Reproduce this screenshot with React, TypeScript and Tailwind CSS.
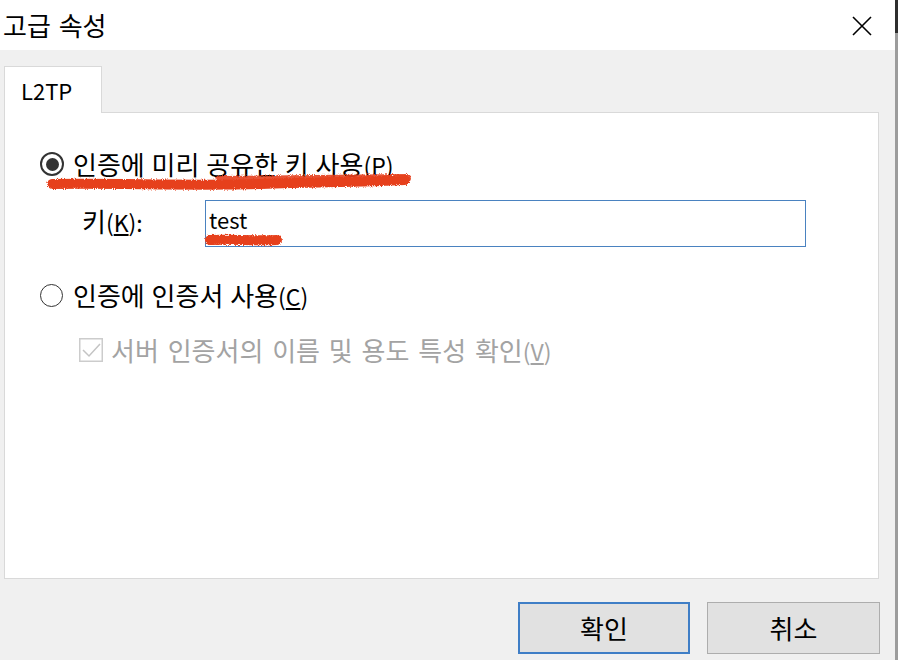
import React from "react";

const FONT = { fontFamily: '"Noto Sans CJK KR", "Noto Sans", sans-serif' };

function Acc({ pre, k, post }: { pre?: string; k: string; post?: string }) {
  return (
    <span className="text-[23px]">
      {pre}(<span className="underline underline-offset-2">{k}</span>){post}
    </span>
  );
}

function Scribbles() {
  return (
    <svg
      className="absolute left-0 top-0 pointer-events-none"
      width={898}
      height={660}
      viewBox="0 0 898 660"
    >
      <defs>
        <filter id="rough" x="-5%" y="-80%" width="110%" height="260%">
          <feTurbulence type="fractalNoise" baseFrequency="0.9" numOctaves="2" seed="5" result="n" />
          <feDisplacementMap in="SourceGraphic" in2="n" scale="4" xChannelSelector="R" yChannelSelector="G" />
        </filter>
      </defs>
      <g filter="url(#rough)" stroke="#e6401c" fill="none" strokeLinecap="round">
        <path d="M52 184 C 120 183, 190 186, 260 184 S 360 182, 405 180" strokeWidth={10} />
        <path d="M220 180 C 280 179, 340 179, 407 178" strokeWidth={8} opacity={0.9} />
        <path d="M210 240 C 230 239, 255 241, 277 240" strokeWidth={10} />
      </g>
    </svg>
  );
}

export default function App() {
  return (
    <div className="relative flex w-[898px] h-[660px] overflow-hidden bg-[#f0f0f0] text-[#000]" style={FONT}>
      <div className="flex flex-col w-[895px] h-full">
        {/* title bar */}
        <div className="flex items-center justify-between h-[50px] bg-white pl-[3px] pr-[23px]">
          <span className="text-[26px] leading-none [word-spacing:2px]">고급 속성</span>
          <svg width="20" height="20" viewBox="0 0 20 20" className="mt-[1px]">
            <path d="M1 1 L19 19 M19 1 L1 19" stroke="#000" strokeWidth="1.6" />
          </svg>
        </div>

        {/* body */}
        <div className="flex flex-col flex-1 bg-[#f0f0f0] pl-[4px]">
          {/* tab */}
          <div className="mt-[16px] flex">
            <div className="relative z-10 flex items-center w-[98px] h-[47px] bg-white border border-b-0 border-[#d9d9d9] pl-[16px] text-[22px] leading-none">
              L2TP
            </div>
          </div>
          {/* panel */}
          <div className="-mt-[1px] w-[875px] h-[467px] bg-white border border-[#d9d9d9] flex flex-col">
            {/* radio 1 */}
            <div className="mt-[37px] ml-[35px] h-[28px] flex items-center">
              <div className="w-[24px] h-[24px] rounded-full border-2 border-[#333] flex items-center justify-center">
                <div className="w-[13px] h-[13px] rounded-full bg-[#333]" />
              </div>
              <span className="ml-[9px] text-[26px] leading-none whitespace-nowrap [word-spacing:1px]">
                인증에 미리 공유한 키 사용<Acc k="P" />
              </span>
            </div>
            {/* key row */}
            <div className="mt-[22px] h-[47px] flex items-center">
              <span className="ml-[77px] w-[123px] mb-[6px] text-[26px] leading-none whitespace-nowrap">
                키<Acc k="K" post=":" />
              </span>
              <div className="w-[601px] h-[47px] border border-[#4a82c0] bg-white flex items-center pl-[3px]">
                <span className="text-[22px] leading-none mb-[10px]">test</span>
              </div>
            </div>
            {/* radio 2 */}
            <div className="mt-[34px] ml-[35px] h-[28px] flex items-center">
              <div className="w-[23px] h-[23px] rounded-full border-[1.5px] border-[#333]" />
              <span className="ml-[10px] text-[26px] leading-none whitespace-nowrap [word-spacing:1px]">
                인증에 인증서 사용<Acc k="C" />
              </span>
            </div>
            {/* checkbox */}
            <div className="mt-[27px] ml-[74px] h-[28px] flex items-center text-[#a3a3a3]">
              <svg width="24" height="24" viewBox="0 0 24 24">
                <rect x="0.75" y="0.75" width="22.5" height="22.5" fill="#fff" stroke="#cccccc" strokeWidth="1.5" />
                <path d="M4 12 L10 18 L21 6" fill="none" stroke="#c4c4c4" strokeWidth="1.5" />
              </svg>
              <span className="ml-[8px] text-[26px] leading-none whitespace-nowrap [word-spacing:3px]">
                서버 인증서의 이름 및 용도 특성 확인<Acc k="V" />
              </span>
            </div>
          </div>
          {/* buttons */}
          <div className="mt-[23px] flex justify-end gap-[17px] pr-[15px]">
            <button className="w-[172px] h-[52px] bg-[#e1e1e1] border-2 border-[#3f7ec6] text-[26px] leading-none flex items-center justify-center">
              확인
            </button>
            <button className="w-[173px] h-[52px] bg-[#e1e1e1] border border-[#adadad] text-[26px] leading-none flex items-center justify-center">
              취소
            </button>
          </div>
        </div>
      </div>
      {/* window edge */}
      <div className="flex flex-col w-[3px] h-full">
        <div className="h-[33px] bg-[#2e2e2e]" />
        <div className="flex-1 bg-[#9c9c9c]" />
      </div>
      <Scribbles />
    </div>
  );
}
